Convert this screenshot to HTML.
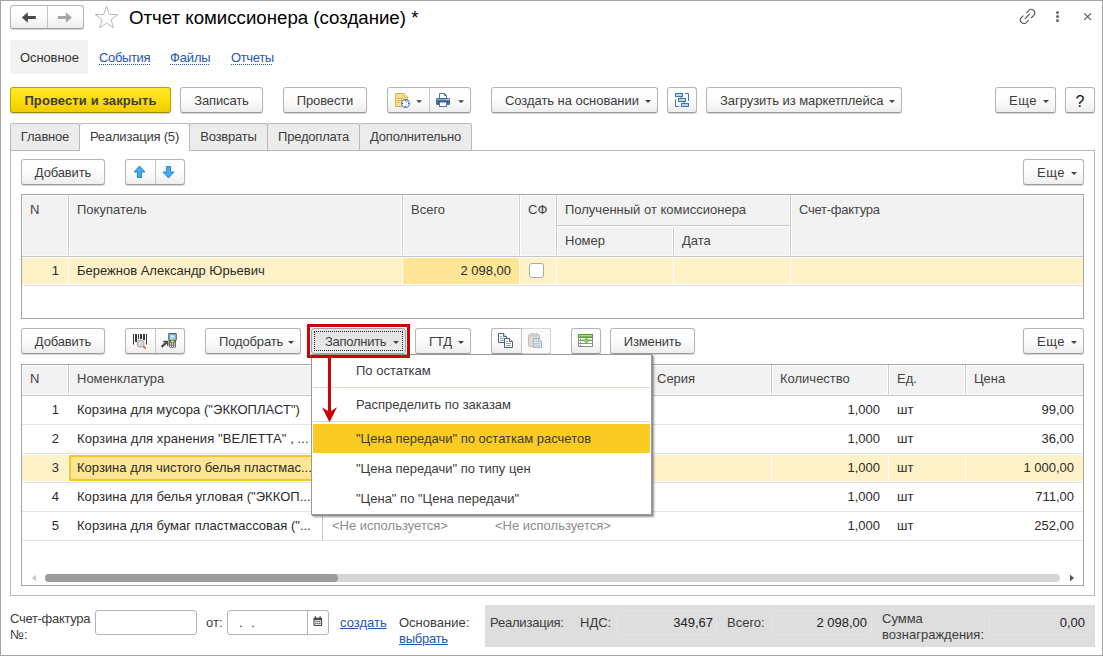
<!DOCTYPE html>
<html lang="ru">
<head>
<meta charset="utf-8">
<title>Отчет комиссионера (создание) *</title>
<style>
*{box-sizing:border-box;margin:0;padding:0}
html,body{width:1103px;height:656px;overflow:hidden;background:#fff}
body{font-family:"Liberation Sans",sans-serif;font-size:13px;color:#3c3c3c;position:relative}
.abs,.btn,.t,.cell,.hl,.vl{position:absolute}
#frame{position:absolute;left:0;top:0;width:1103px;height:656px;border:1px solid #a3a3a3;pointer-events:none;z-index:50}
.btn{height:26px;border:1px solid #b5b5b5;border-bottom-color:#9a9a9a;border-radius:3px;background:linear-gradient(#ffffff 0%,#fdfdfd 45%,#eeeeee 100%);box-shadow:0 1px 1px rgba(0,0,0,.18);line-height:25px;text-align:center;white-space:nowrap;color:#3c3c3c;overflow:visible;letter-spacing:-0.15px}
.btn.y{letter-spacing:0.1px;background:linear-gradient(#ffe92d 0%,#fbdc05 55%,#efcc00 100%);border-color:#b8a000;border-bottom-color:#a08800;font-weight:bold;color:#3d3d3d}
.btn .dv{position:absolute;top:0;bottom:0;width:1px;background:#c4c4c4}
.btn.dd{text-align:left;padding-left:13px}
.car{position:absolute;right:6px;top:12px;width:0;height:0;border-left:3.3px solid transparent;border-right:3.3px solid transparent;border-top:3.3px solid #444}
.t{white-space:nowrap;line-height:16px}
a.l{color:#2456b3;text-decoration:underline dotted;text-decoration-thickness:1px;text-underline-offset:2px}
a.u{color:#2456b3;text-decoration:underline}
.tab{position:absolute;top:123px;height:27px;border:1px solid #b9b9b9;border-bottom:none;border-radius:3px 3px 0 0;background:#ececec;line-height:25px;text-align:center;letter-spacing:-0.2px}
.tab.on{top:123px;height:28px;background:#fff;border-color:#b9b9b9;z-index:3;line-height:25px}
.grid{position:absolute;border:1px solid #a6a6a6;background:#fff;overflow:hidden}
.hd{position:absolute;background:#f2f2f2;color:#444}
.cell{white-space:nowrap;line-height:16px;color:#2b2b2b}
.vl{width:1px}
.hl{height:1px}
.fld{position:absolute;height:25px;border:1px solid #b3b3b3;border-radius:3px;background:#fff}
.ro{position:absolute;height:25px;border:1px solid #e4e4e4;border-radius:3px;text-align:right;line-height:23px;padding-right:4px;color:#222}
.mi{position:absolute;left:44px;white-space:nowrap;line-height:16px;color:#3c3c3c}
</style>
</head>
<body>
<div id="frame"></div>

<!-- title bar -->
<div class="btn" style="left:10px;top:5px;width:74px;height:24px">
  <span class="dv" style="left:36px"></span>
  <svg class="abs" style="left:10px;top:6px" width="16" height="12" viewBox="0 0 16 12"><path d="M0.8 5.5 L6.8 0.2 V4.1 H14.8 V6.9 H6.8 V10.8 Z" fill="#4a4a4a"/></svg>
  <svg class="abs" style="left:46px;top:6px" width="16" height="12" viewBox="0 0 16 12"><path d="M14.9 5.5 L8.9 0.2 V4.1 H1 V6.9 H8.9 V10.8 Z" fill="#a6a6a6"/></svg>
</div>
<svg class="abs" style="left:94px;top:5px" width="26" height="26" viewBox="0 0 26 26"><path d="M12.60 1.40 L15.40 9.45 L23.92 9.62 L17.13 14.77 L19.59 22.93 L12.60 18.06 L5.61 22.93 L8.07 14.77 L1.28 9.62 L9.80 9.45 Z" fill="#fff" stroke="#b3bac2" stroke-width="1"/></svg>
<div class="t" id="title" style="left:129px;top:5px;font-size:18.67px;line-height:26px;color:#000">Отчет комиссионера (создание) *</div>

<svg class="abs" style="left:1018px;top:8px" width="19" height="18" viewBox="0 0 19 18" fill="none" stroke="#4f4f4f" stroke-width="1.1" stroke-linecap="round"><path d="M8.7 4.56 L10.93 2.33 A3.5 3.5 0 0 1 15.87 7.27 L13.4 9.74"/><path d="M5.05 7.8 L3.23 9.63 A3.5 3.5 0 0 0 8.17 14.57 L10.35 12.4"/><path d="M7.1 10.7 L11.6 6.2"/></svg>
<svg class="abs" style="left:1055px;top:10px" width="5" height="14" viewBox="0 0 5 14"><circle cx="2.5" cy="2.4" r="1.5" fill="#6a6a6a"/><circle cx="2.5" cy="6.5" r="1.5" fill="#6a6a6a"/><circle cx="2.5" cy="10.6" r="1.5" fill="#6a6a6a"/></svg>
<svg class="abs" style="left:1083px;top:12px" width="10" height="10" viewBox="0 0 10 10"><path d="M1.2 1.3 L8 7.9 M8 1.3 L1.2 7.9" stroke="#555" stroke-width="1.1"/></svg>

<!-- nav -->
<div class="abs" style="left:10px;top:40px;width:78px;height:34px;background:#f2f2f2;border-radius:3px"></div>
<div class="t" id="nav1" style="left:20px;top:50px;color:#333;letter-spacing:-0.1px">Основное</div>
<div class="t" id="nav2" style="left:99px;top:50px;letter-spacing:-0.35px"><a class="l">События</a></div>
<div class="t" id="nav3" style="left:170px;top:50px;letter-spacing:-0.15px"><a class="l">Файлы</a></div>
<div class="t" id="nav4" style="left:231px;top:50px;letter-spacing:-0.35px"><a class="l">Отчеты</a></div>

<!-- main toolbar -->
<div class="btn y" id="b1" style="left:10px;top:87px;width:161px">Провести и закрыть</div>
<div class="btn" id="b2" style="left:180px;top:87px;width:83px">Записать</div>
<div class="btn" id="b3" style="left:283px;top:87px;width:84px">Провести</div>
<div class="btn" id="b4" style="left:387px;top:87px;width:84px"><span class="dv" style="left:41px"></span><svg class="abs" style="left:6px;top:4px" width="18" height="18" viewBox="0 0 18 18">
<path d="M1.5 1.5 H10 L13.5 5 V14.5 H1.5 Z" fill="#f6df8e" stroke="#d9b350" stroke-width="1"/>
<path d="M10 1.5 V5 H13.5" fill="#fdf3c8" stroke="#d9b350" stroke-width="1"/>
<path d="M3.5 6.5 H5.5 M6.5 6.5 H9 M3.5 8.5 H5.5 M6.5 8.5 H8 M3.5 10.5 H5.5" stroke="#d2aa45" stroke-width="1"/>
<circle cx="11.5" cy="11.5" r="3.9" fill="#fff" stroke="#4583c2" stroke-width="1.1"/>
<path d="M11.5 11.5 L12.2 8.6 A3 3 0 0 1 14 10 Z" fill="#a9bfea"/>
<g fill="#ee1111"><rect x="11" y="8" width="1" height="1"/><rect x="14" y="11" width="1" height="1"/><rect x="11" y="14" width="1" height="1"/><rect x="8" y="11" width="1" height="1"/></g>
</svg><svg class="abs" style="left:28px;top:12px" width="7" height="4" viewBox="0 0 7 4"><path d="M0.1 0.2 H6.1 L3.1 3.1 Z" fill="#444"/></svg><svg class="abs" style="left:47px;top:4px" width="16" height="16" viewBox="0 0 16 16">
<path d="M4.5 6.5 V1.5 H9.5 L11.5 3.5 V6.5" fill="#fff" stroke="#50749c" stroke-width="1"/>
<path d="M9.5 1.5 V3.5 H11.5" fill="none" stroke="#50749c" stroke-width="1"/>
<rect x="1" y="6" width="14" height="7" rx="1.5" fill="#416e9c"/>
<rect x="2" y="7" width="12" height="1.2" fill="#7fa3c9"/>
<rect x="11.3" y="7" width="1" height="1" fill="#fff"/><rect x="13" y="7" width="1" height="1" fill="#fff"/>
<rect x="3.3" y="9" width="9.4" height="1.3" fill="#27496e"/>
<rect x="4.5" y="10" width="7" height="4.5" fill="#fff" stroke="#50749c" stroke-width="1"/>
</svg><svg class="abs" style="left:70px;top:12px" width="7" height="4" viewBox="0 0 7 4"><path d="M0.1 0.2 H6.1 L3.1 3.1 Z" fill="#444"/></svg></div>
<div class="btn dd" id="b5" style="left:491px;top:87px;width:167px;letter-spacing:-0.05px">Создать на основании<span class="car"></span></div>
<div class="btn" id="b6" style="left:667px;top:87px;width:30px"><svg class="abs" style="left:6px;top:4px" width="16" height="16" viewBox="0 0 16 16" fill="none" stroke="#3d78a8" stroke-width="1">
<rect x="1.5" y="1.5" width="7" height="3" fill="#b9d3ea"/>
<rect x="4.5" y="6.5" width="7" height="3" fill="#b9d3ea"/>
<rect x="7.5" y="11.5" width="7" height="3" fill="#b9d3ea"/>
<path d="M7 4.5 V6.5 M10 9.5 V11.5"/>
<path d="M11 1.5 H14.5 V9"/>
<path d="M1.5 7.5 V14.5 H5"/>
</svg></div>
<div class="btn dd" id="b7" style="left:706px;top:87px;width:196px;letter-spacing:-0.05px">Загрузить из маркетплейса<span class="car"></span></div>
<div class="btn dd" id="b8" style="left:995px;top:87px;width:61px;letter-spacing:0.5px">Еще<span class="car"></span></div>
<div class="btn" id="b9" style="left:1065px;top:87px;width:30px;font-size:16px;line-height:27px;color:#111;letter-spacing:0">?</div>

<!-- tabs -->
<div class="abs" style="left:10px;top:150px;width:1085px;height:446px;border:1px solid #b9b9b9;background:#fff"></div>
<div class="tab" style="left:10px;width:70px">Главное</div>
<div class="tab on" style="left:79px;width:111px">Реализация (5)</div>
<div class="tab" style="left:189px;width:79px">Возвраты</div>
<div class="tab" style="left:267px;width:93px">Предоплата</div>
<div class="tab" style="left:359px;width:113px">Дополнительно</div>

<!-- toolbar 1 -->
<div class="btn" id="c1" style="left:21px;top:159px;width:84px">Добавить</div>
<div class="btn" id="c2" style="left:125px;top:159px;width:60px"><span class="dv" style="left:29px"></span><svg class="abs" style="left:7px;top:5px" width="13" height="14" viewBox="0 0 13 14"><path d="M6.5 1 L12 7 H8.6 V12.5 H4.4 V7 H1 Z" fill="#41ace9" stroke="#2b86c6" stroke-width="1" stroke-linejoin="miter"/></svg><svg class="abs" style="left:36px;top:5px" width="13" height="14" viewBox="0 0 13 14"><path d="M6.5 13 L12 7 H8.6 V1.5 H4.4 V7 H1 Z" fill="#41ace9" stroke="#2b86c6" stroke-width="1" stroke-linejoin="miter"/></svg></div>
<div class="btn dd" id="c3" style="left:1023px;top:159px;width:61px;letter-spacing:0.5px">Еще<span class="car"></span></div>

<!-- grid 1 -->
<div class="grid" id="g1" style="left:21px;top:194px;width:1063px;height:125px">
<div class="hd" style="left:0;top:0;width:1061px;height:61px"></div>
<div class="hl" style="left:0;top:0;width:1061px;background:#fff"></div>
<div class="vl" style="left:0;top:0;height:61px;background:#fff"></div>
<div class="vl" style="left:45px;top:0;height:61px;background:#fff"></div>
<div class="vl" style="left:46px;top:0;height:61px;background:#cbcbcb"></div>
<div class="vl" style="left:47px;top:0;height:61px;background:#fff"></div>
<div class="vl" style="left:379px;top:0;height:61px;background:#fff"></div>
<div class="vl" style="left:380px;top:0;height:61px;background:#cbcbcb"></div>
<div class="vl" style="left:381px;top:0;height:61px;background:#fff"></div>
<div class="vl" style="left:496px;top:0;height:61px;background:#fff"></div>
<div class="vl" style="left:497px;top:0;height:61px;background:#cbcbcb"></div>
<div class="vl" style="left:498px;top:0;height:61px;background:#fff"></div>
<div class="vl" style="left:533px;top:0;height:61px;background:#fff"></div>
<div class="vl" style="left:534px;top:0;height:61px;background:#cbcbcb"></div>
<div class="vl" style="left:535px;top:0;height:61px;background:#fff"></div>
<div class="vl" style="left:767px;top:0;height:61px;background:#fff"></div>
<div class="vl" style="left:768px;top:0;height:61px;background:#cbcbcb"></div>
<div class="vl" style="left:769px;top:0;height:61px;background:#fff"></div>
<div class="vl" style="left:650px;top:30px;height:31px;background:#fff"></div>
<div class="vl" style="left:651px;top:30px;height:31px;background:#cbcbcb"></div>
<div class="vl" style="left:652px;top:31px;height:30px;background:#fff"></div>
<div class="hl" style="left:535px;top:30px;width:233px;background:#cbcbcb"></div>
<div class="hl" style="left:536px;top:31px;width:232px;background:#fff"></div>
<div class="hl" style="left:0;top:60px;width:1061px;background:#fafafa"></div>
<div class="hl" style="left:0;top:61px;width:1061px;background:#c4c4c4"></div>
<div class="abs" style="left:0;top:63px;width:1061px;height:26px;background:#fff2c9"></div>
<div class="abs" style="left:381px;top:63px;width:116px;height:26px;background:#ffe596"></div>
<div class="vl" style="left:46px;top:63px;height:26px;background:#fffdf5"></div>
<div class="vl" style="left:380px;top:63px;height:26px;background:#fffdf5"></div>
<div class="vl" style="left:497px;top:63px;height:26px;background:#fffdf5"></div>
<div class="vl" style="left:534px;top:63px;height:26px;background:#fffdf5"></div>
<div class="vl" style="left:651px;top:63px;height:26px;background:#fffdf5"></div>
<div class="vl" style="left:768px;top:63px;height:26px;background:#fffdf5"></div>
<div class="hl" style="left:0;top:90px;width:1061px;background:#e4e4e4"></div>
<div class="cell" id="h1n" style="left:8px;top:7px;color:#444">N</div>
<div class="cell" id="h1p" style="left:55px;top:7px;color:#444">Покупатель</div>
<div class="cell" style="left:389px;top:7px;color:#444">Всего</div>
<div class="cell" style="left:506px;top:7px;color:#444">СФ</div>
<div class="cell" id="h1k" style="left:543px;top:7px;color:#444">Полученный от комиссионера</div>
<div class="cell" id="h1m" style="left:543px;top:38px;color:#444">Номер</div>
<div class="cell" style="left:660px;top:38px;color:#444">Дата</div>
<div class="cell" style="left:777px;top:7px;color:#444;letter-spacing:-0.25px">Счет-фактура</div>
<div class="cell" id="r1n" style="left:0px;width:37px;text-align:right;top:68px">1</div>
<div class="cell" id="r1b" style="left:55px;top:68px">Бережнов Александр Юрьевич</div>
<div class="cell" id="r1s" style="left:381px;width:108px;text-align:right;top:68px">2 098,00</div>
<div class="abs" style="left:507px;top:68px;width:15px;height:15px;border:1px solid #a9a9a9;border-radius:3px;background:#fff"></div>
</div>

<!-- toolbar 2 -->
<div class="btn" id="d1" style="left:21px;top:328px;width:84px">Добавить</div>
<div class="btn" id="d2" style="left:125px;top:328px;width:60px"><span class="dv" style="left:29px"></span><svg class="abs" style="left:6px;top:4px" width="17" height="17" viewBox="0 0 17 17">
<g fill="#3a3a3a"><rect x="1" y="1" width="1" height="10.5"/><rect x="3" y="1" width="2" height="8"/><rect x="6" y="1" width="1" height="5"/><rect x="8" y="1" width="2" height="5"/><rect x="11" y="1" width="2" height="6"/><rect x="14" y="1" width="1" height="10.5"/></g>
<path d="M11 13 L13.2 15.1" stroke="#bf8a5c" stroke-width="2.1" stroke-linecap="round"/>
<circle cx="8.6" cy="10.5" r="3.4" fill="#c4dbf8" stroke="#c9a07e" stroke-width="1.1"/>
</svg><svg class="abs" style="left:34px;top:3px" width="18" height="18" viewBox="0 0 18 18">
<path d="M1.6 14.9 L6.6 10.2" stroke="#454545" stroke-width="2.2"/>
<path d="M3.2 9.4 H7.7 V13.8" stroke="#454545" stroke-width="1.5" fill="none"/>
<rect x="9.1" y="7.5" width="6.8" height="8.2" rx="1.3" fill="#5e5e5e"/>
<rect x="8.2" y="1.1" width="8.6" height="7.6" rx="1.3" fill="#585858"/>
<rect x="9.3" y="2.2" width="6.4" height="5.7" fill="#8ccff5"/>
<path d="M10.3 3.6 H13 L14.8 5.3 H12.3 Z M10.3 5.6 H12 L12.8 6.6 H10.3 Z" fill="#e4f4ff"/>
<rect x="10.9" y="8.5" width="3.2" height="1.4" rx=".5" fill="#f6e200"/>
<g fill="#fff"><rect x="10.1" y="10.6" width="1.1" height="1.1"/><rect x="11.95" y="10.6" width="1.1" height="1.1"/><rect x="13.8" y="10.6" width="1.1" height="1.1"/><rect x="10.1" y="12.3" width="1.1" height="1.1"/><rect x="11.95" y="12.3" width="1.1" height="1.1"/><rect x="13.8" y="12.3" width="1.1" height="1.1"/><rect x="10.1" y="14.0" width="1.1" height="1.1"/><rect x="11.95" y="14.0" width="1.1" height="1.1"/><rect x="13.8" y="14.0" width="1.1" height="1.1"/></g>
</svg></div>
<div class="btn dd" id="d3" style="left:205px;top:328px;width:96px">Подобрать<span class="car"></span></div>
<div class="btn dd" id="d4" style="left:311px;top:328px;width:95px;letter-spacing:-0.28px;background:linear-gradient(#e2e2e2,#ececec);border-color:#a0a0a0;box-shadow:none">Заполнить<span class="car"></span><span class="abs" style="left:2px;top:2px;right:2px;bottom:2px;border:1px dotted #222"></span></div>
<div class="btn dd" id="d5" style="left:415px;top:328px;width:56px">ГТД<span class="car"></span></div>
<div class="btn" id="d6" style="left:491px;top:328px;width:60px"><span class="dv" style="left:29px"></span><span class="abs" style="left:30px;top:-1px;width:29px;height:26px;border:1px solid #d6d6d6;border-left:none;border-radius:0 3px 3px 0;background:#fafafa"></span><svg class="abs" style="left:6px;top:4px" width="16" height="16" viewBox="0 0 16 16" fill="#fff" stroke="#4b607d" stroke-width="1">
<path d="M0.5 0.5 H5.5 L8.5 3.5 V9.5 H0.5 Z"/><path d="M5.5 0.5 V3.5 H8.5" fill="#e8eef5"/>
<path d="M2 3.5 H4 M2 5.5 H7 M2 7.5 H6" stroke="#8fa0b8"/>
<path d="M6.5 5.5 H11.5 L14.5 8.5 V14.5 H6.5 Z"/><path d="M11.5 5.5 V8.5 H14.5" fill="#e8eef5"/>
<path d="M8 8.5 H10 M8 10.5 H13 M8 12.5 H13" stroke="#8fa0b8"/>
</svg><svg class="abs" style="left:36px;top:4px" width="16" height="16" viewBox="0 0 16 16">
<rect x="0.5" y="1.5" width="11" height="12" rx="1" fill="#d8d8d8" stroke="#d2b8aa"/>
<rect x="3" y="0.3" width="6" height="2.6" rx="1" fill="#cdd3dc" stroke="#b4bcc8" stroke-width=".7"/>
<path d="M5.5 5.5 H10.5 L13.5 8.5 V14.5 H5.5 Z" fill="#e0e0e0" stroke="#a3b5c9"/>
<path d="M10.5 5.5 V8.5 H13.5" fill="#eee" stroke="#a3b5c9"/>
<path d="M7 8.5 H9 M7 10.5 H12 M7 12.5 H12" stroke="#b5c4d6"/>
</svg></div>
<div class="btn" id="d7" style="left:571px;top:328px;width:30px"><svg class="abs" style="left:6px;top:5px" width="15" height="13" viewBox="0 0 15 13">
<rect x="0.5" y="3.5" width="14" height="9" fill="#fff" stroke="#8c8c8c"/>
<path d="M0.5 6.5 H14.5 M0.5 9.5 H14.5" stroke="#8c8c8c"/>
<g fill="#4f74a3"><rect x="2" y="5" width="1" height="1"/><rect x="2" y="8" width="1" height="1"/><rect x="2" y="11" width="1" height="1"/></g>
<rect x="0" y="0" width="15" height="3.6" fill="#539e26"/>
<rect x="1" y="1" width="13" height="1.5" fill="#a9df7d"/>
<rect x="7.7" y="2" width="1.6" height="5" fill="#62ad33"/>
<path d="M4 5.3 H13 L8.5 9.3 Z" fill="#74be43"/>
<path d="M6.5 6 H10.5 L8.5 7.8 Z" fill="#9ad96c"/>
</svg></div>
<div class="btn" id="d8" style="left:610px;top:328px;width:85px">Изменить</div>
<div class="btn dd" id="d9" style="left:1023px;top:328px;width:61px;letter-spacing:0.5px">Еще<span class="car"></span></div>

<!-- grid 2 -->
<div class="grid" id="g2" style="left:21px;top:364px;width:1063px;height:222px">
<div class="hd" style="left:0;top:0;width:1061px;height:30px"></div>
<div class="hl" style="left:0;top:0;width:1061px;background:#fff"></div>
<div class="vl" style="left:0;top:0;height:30px;background:#fff"></div>
<div class="vl" style="left:45px;top:0;height:30px;background:#fff"></div>
<div class="vl" style="left:46px;top:0;height:30px;background:#cbcbcb"></div>
<div class="vl" style="left:47px;top:0;height:30px;background:#fff"></div>
<div class="vl" style="left:299px;top:0;height:30px;background:#fff"></div>
<div class="vl" style="left:300px;top:0;height:30px;background:#cbcbcb"></div>
<div class="vl" style="left:301px;top:0;height:30px;background:#fff"></div>
<div class="vl" style="left:628px;top:0;height:30px;background:#fff"></div>
<div class="vl" style="left:629px;top:0;height:30px;background:#cbcbcb"></div>
<div class="vl" style="left:630px;top:0;height:30px;background:#fff"></div>
<div class="vl" style="left:748px;top:0;height:30px;background:#fff"></div>
<div class="vl" style="left:749px;top:0;height:30px;background:#cbcbcb"></div>
<div class="vl" style="left:750px;top:0;height:30px;background:#fff"></div>
<div class="vl" style="left:865px;top:0;height:30px;background:#fff"></div>
<div class="vl" style="left:866px;top:0;height:30px;background:#cbcbcb"></div>
<div class="vl" style="left:867px;top:0;height:30px;background:#fff"></div>
<div class="vl" style="left:942px;top:0;height:30px;background:#fff"></div>
<div class="vl" style="left:943px;top:0;height:30px;background:#cbcbcb"></div>
<div class="vl" style="left:944px;top:0;height:30px;background:#fff"></div>
<div class="hl" style="left:0;top:29px;width:1061px;background:#fafafa"></div>
<div class="hl" style="left:0;top:30px;width:1061px;background:#c4c4c4"></div>
<div class="hl" style="left:0;top:59px;width:1061px;background:#e4e4e4"></div>
<div class="hl" style="left:0;top:88px;width:1061px;background:#e4e4e4"></div>
<div class="abs" style="left:0;top:90px;width:1061px;height:26px;background:#fff2c9"></div>
<div class="vl" style="left:46px;top:90px;height:26px;background:#fffdf5"></div>
<div class="vl" style="left:300px;top:90px;height:26px;background:#fffdf5"></div>
<div class="vl" style="left:629px;top:90px;height:26px;background:#fffdf5"></div>
<div class="vl" style="left:749px;top:90px;height:26px;background:#fffdf5"></div>
<div class="vl" style="left:866px;top:90px;height:26px;background:#fffdf5"></div>
<div class="vl" style="left:943px;top:90px;height:26px;background:#fffdf5"></div>
<div class="abs" style="left:47px;top:90px;width:253px;height:26px;background:#ffe596;border:2px solid #f6c61e"></div>
<div class="hl" style="left:0;top:117px;width:1061px;background:#e4e4e4"></div>
<div class="hl" style="left:0;top:146px;width:1061px;background:#e4e4e4"></div>
<div class="hl" style="left:0;top:175px;width:1061px;background:#e4e4e4"></div>
<div class="vl" style="left:300px;top:31px;height:58px;background:#c9c9c9"></div>
<div class="vl" style="left:300px;top:118px;height:58px;background:#c9c9c9"></div>
<div class="cell" style="left:8px;top:6px;color:#444">N</div>
<div class="cell" style="left:55px;top:6px;color:#444">Номенклатура</div>
<div class="cell" style="left:309px;top:6px;color:#444">Характеристика</div>
<div class="cell" style="left:635px;top:6px;color:#444">Серия</div>
<div class="cell" style="left:758px;top:6px;color:#444">Количество</div>
<div class="cell" style="left:875px;top:6px;color:#444">Ед.</div>
<div class="cell" style="left:952px;top:6px;color:#444">Цена</div>
<div class="cell" style="left:0px;width:37px;text-align:right;top:37px">1</div>
<div class="cell" id="n0" style="letter-spacing:0.035px;left:55px;top:37px">Корзина для мусора ("ЭККОПЛАСТ")</div>
<div class="cell" style="left:310px;top:37px;color:#8c8c8c">&lt;Не используется&gt;</div>
<div class="cell" style="left:473px;top:37px;color:#8c8c8c">&lt;Не используется&gt;</div>
<div class="cell" style="left:750px;width:108px;text-align:right;top:37px">1,000</div>
<div class="cell" style="left:875px;top:37px">шт</div>
<div class="cell" id="p0" style="left:944px;width:108px;text-align:right;top:37px">99,00</div>
<div class="cell" style="left:0px;width:37px;text-align:right;top:66px">2</div>
<div class="cell" id="n1" style="letter-spacing:0.075px;left:55px;top:66px">Корзина для хранения "ВЕЛЕТТА" , ...</div>
<div class="cell" style="left:310px;top:66px;color:#8c8c8c">&lt;Не используется&gt;</div>
<div class="cell" style="left:473px;top:66px;color:#8c8c8c">&lt;Не используется&gt;</div>
<div class="cell" style="left:750px;width:108px;text-align:right;top:66px">1,000</div>
<div class="cell" style="left:875px;top:66px">шт</div>
<div class="cell" id="p1" style="left:944px;width:108px;text-align:right;top:66px">36,00</div>
<div class="cell" style="left:0px;width:37px;text-align:right;top:95px">3</div>
<div class="cell" id="n2" style="left:55px;top:95px">Корзина для чистого белья пластмас...</div>
<div class="cell" style="left:310px;top:95px;color:#8c8c8c">&lt;Не используется&gt;</div>
<div class="cell" style="left:473px;top:95px;color:#8c8c8c">&lt;Не используется&gt;</div>
<div class="cell" style="left:750px;width:108px;text-align:right;top:95px">1,000</div>
<div class="cell" style="left:875px;top:95px">шт</div>
<div class="cell" id="p2" style="left:944px;width:108px;text-align:right;top:95px">1 000,00</div>
<div class="cell" style="left:0px;width:37px;text-align:right;top:124px">4</div>
<div class="cell" id="n3" style="letter-spacing:0.04px;left:55px;top:124px">Корзина для белья угловая ("ЭККОП...</div>
<div class="cell" style="left:310px;top:124px;color:#8c8c8c">&lt;Не используется&gt;</div>
<div class="cell" style="left:473px;top:124px;color:#8c8c8c">&lt;Не используется&gt;</div>
<div class="cell" style="left:750px;width:108px;text-align:right;top:124px">1,000</div>
<div class="cell" style="left:875px;top:124px">шт</div>
<div class="cell" id="p3" style="left:944px;width:108px;text-align:right;top:124px">711,00</div>
<div class="cell" style="left:0px;width:37px;text-align:right;top:153px">5</div>
<div class="cell" id="n4" style="letter-spacing:0.045px;left:55px;top:153px">Корзина для бумаг пластмассовая ("...</div>
<div class="cell" style="left:310px;top:153px;color:#8c8c8c">&lt;Не используется&gt;</div>
<div class="cell" style="left:473px;top:153px;color:#8c8c8c">&lt;Не используется&gt;</div>
<div class="cell" style="left:750px;width:108px;text-align:right;top:153px">1,000</div>
<div class="cell" style="left:875px;top:153px">шт</div>
<div class="cell" id="p4" style="left:944px;width:108px;text-align:right;top:153px">252,00</div>
<div class="abs" style="left:23px;top:209px;width:1015px;height:8px;border-radius:4px;background:#d6d6d6"></div>
<div class="abs" style="left:23px;top:209px;width:293px;height:8px;border-radius:4px;background:#9c9c9c"></div>
<svg class="abs" style="left:9px;top:209px" width="6" height="8" viewBox="0 0 6 8"><path d="M5 0.5 L1 4 L5 7.5 Z" fill="#c9c9c9"/></svg>
<svg class="abs" style="left:1047px;top:209px" width="6" height="8" viewBox="0 0 6 8"><path d="M1 0.5 L5 4 L1 7.5 Z" fill="#555"/></svg>
</div>

<div class="abs" id="menu" style="left:311px;top:354px;width:341px;height:161px;background:#fff;border:1px solid #999;box-shadow:1px 1px 0 #8f8f8f,2px 2px 2px rgba(0,0,0,.4);z-index:20">
<div class="hl" style="left:1px;top:32px;width:337px;background:#ddd9cb"></div>
<div class="hl" style="left:1px;top:66px;width:337px;background:#ddd9cb"></div>
<div class="abs" style="left:1px;top:69px;width:337px;height:29px;background:#f9cb23"></div>
<div class="mi" id="mi0" style="top:8px">По остаткам</div>
<div class="mi" id="mi1" style="top:42px">Распределить по заказам</div>
<div class="mi" id="mi2" style="top:76px">"Цена передачи" по остаткам расчетов</div>
<div class="mi" id="mi3" style="top:106px">"Цена передачи" по типу цен</div>
<div class="mi" id="mi4" style="top:136px">"Цена" по "Цена передачи"</div>
</div>
<div class="abs" style="left:307px;top:324px;width:103px;height:34px;border:3px solid #cc0407;z-index:30"></div>
<svg class="abs" style="left:318px;top:356px;z-index:30" width="24" height="68" viewBox="0 0 24 68"><path d="M10 0 H13 V55 L19 51.3 L11.5 66.2 L4 51.3 L10 55 Z" fill="#cc0407"/></svg>
<!-- footer -->
<div class="abs" style="left:485px;top:605px;width:610px;height:42px;background:#dedede"></div>

<div class="t" style="left:10px;top:611px;line-height:16px"><span style="letter-spacing:-0.3px">Счет-фактура</span><br>№:</div>
<div class="fld" style="left:95px;top:610px;width:102px"></div>
<div class="t" id="ot" style="left:206px;top:615px">от:</div>
<div class="fld" style="left:227px;top:610px;width:102px"><span class="abs" style="left:79px;top:0;bottom:0;width:1px;background:#b3b3b3"></span><span class="t" style="left:11px;top:4px;color:#333;letter-spacing:8.7px">..</span><svg class="abs" style="left:85px;top:5px" width="9.6" height="10.5" viewBox="0 0 11 12"><rect x="0.5" y="2" width="10" height="9.5" rx="1.2" fill="#4a4a4a"/><rect x="2" y="0.3" width="1.6" height="3" fill="#4a4a4a"/><rect x="7.4" y="0.3" width="1.6" height="3" fill="#4a4a4a"/><rect x="1.8" y="4.6" width="7.4" height="5.6" fill="#fff"/><g fill="#4a4a4a"><rect x="2.6" y="5.4" width="1.5" height="1.5"/><rect x="4.8" y="5.4" width="1.5" height="1.5"/><rect x="7" y="5.4" width="1.5" height="1.5"/><rect x="2.6" y="7.8" width="1.5" height="1.5"/><rect x="4.8" y="7.8" width="1.5" height="1.5"/><rect x="7" y="7.8" width="1.5" height="1.5"/></g></svg></div>
<div class="t" id="cr" style="left:340px;top:615px"><a class="u">создать</a></div>
<div class="t" id="osn" style="left:399px;top:615px">Основание:<br><a class="u" style="letter-spacing:-0.25px">выбрать</a></div>
<div class="t" id="rl" style="left:490px;top:615px;letter-spacing:-0.2px">Реализация:</div>
<div class="t" id="nds" style="left:580px;top:615px">НДС:</div>
<div class="ro" style="left:616px;top:610px;width:101px;padding-right:3px">349,67</div>
<div class="t" style="left:727px;top:615px">Всего:</div>
<div class="ro" style="left:771px;top:610px;width:101px">2 098,00</div>
<div class="t" style="left:882px;top:611px;line-height:16px">Сумма<br>вознаграждения:</div>
<div class="ro" style="left:989px;top:610px;width:101px">0,00</div>
</body>
</html>
